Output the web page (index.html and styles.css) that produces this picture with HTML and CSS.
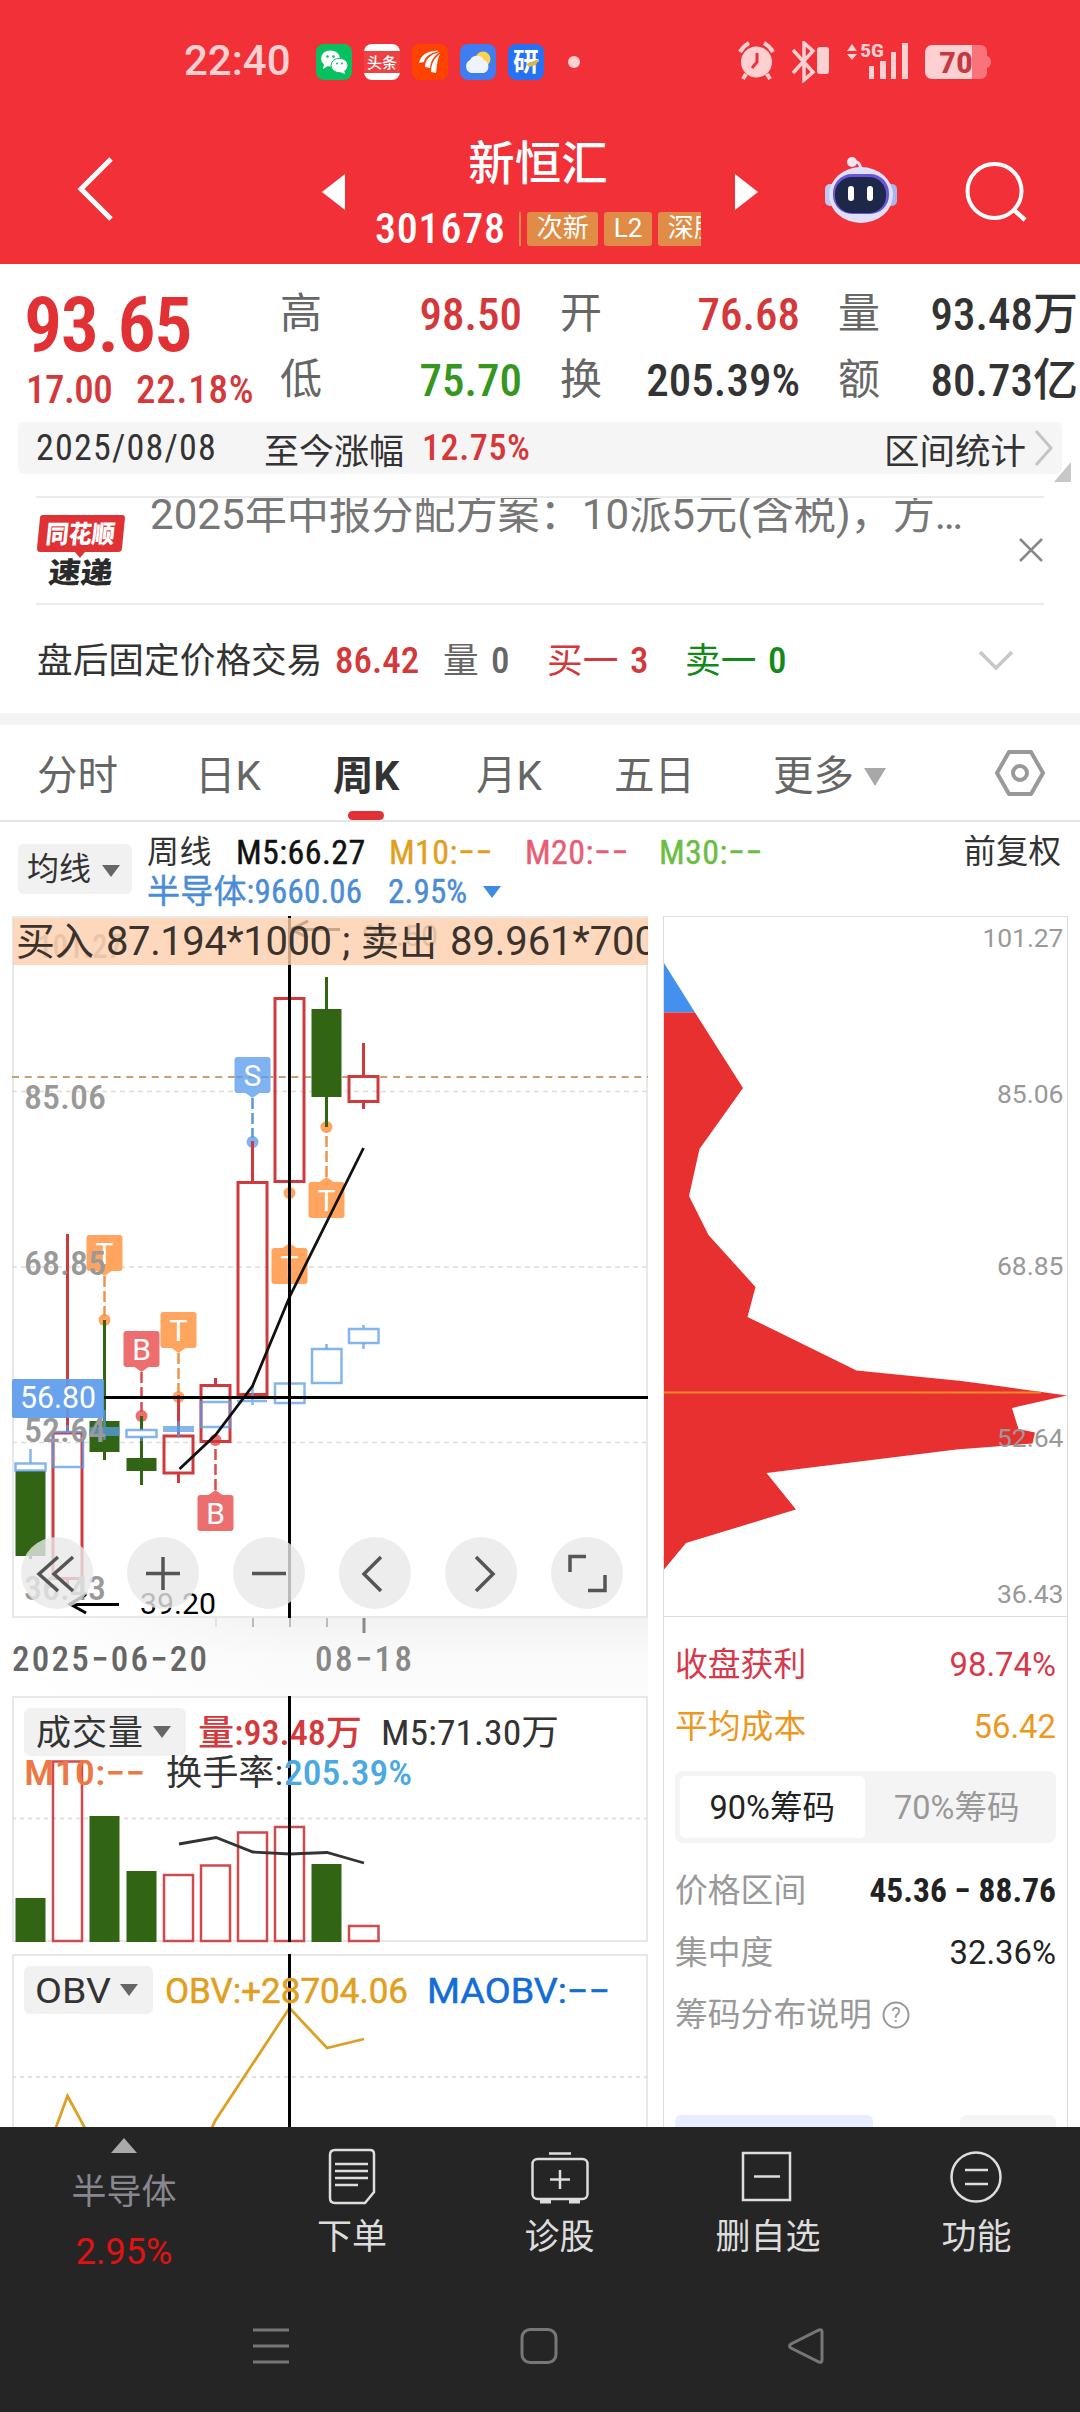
FILE: index.html
```html
<!DOCTYPE html>
<html lang="zh-CN">
<head>
<meta charset="utf-8">
<title>新恒汇 301678</title>
<link rel="stylesheet" href="styles.css">
</head>
<body>
<div class="app">
  <header class="top">
    <div class="status">
      <span class="clock">22:40</span>
      <div class="apps">
        <svg width="36" height="36" viewBox="0 0 36 36"><rect width="36" height="36" rx="8" fill="#07c160"/><ellipse cx="14.500" cy="14.500" rx="9.500" ry="8" fill="#fff"/><path d="M8 20l-1 5 5-3z" fill="#fff"/><ellipse cx="23.500" cy="21.500" rx="8.500" ry="7.200" fill="#fff" stroke="#07c160"/><path d="M28 26l1 4-5-2z" fill="#fff"/><g fill="#07c160"><circle cx="11.500" cy="12.500" r="1.300"/><circle cx="17.500" cy="12.500" r="1.300"/><circle cx="21" cy="19.500" r="1"/><circle cx="26" cy="19.500" r="1"/></g></svg>
        <svg width="36" height="36" viewBox="0 0 36 36"><rect width="36" height="36" rx="8" fill="#fff"/><rect y="7" width="36" height="22" fill="#f04142"/><text x="18" y="24" text-anchor="middle" font-size="15" font-weight="500" fill="#fff" class="cjk">头条</text></svg>
        <svg width="36" height="36" viewBox="0 0 36 36"><rect width="36" height="36" rx="8" fill="#fe4300"/><path d="M7 19C9 10 18 6 27 7c-8 2-14 5-15 11z" fill="#fff"/><path d="M13 23c0-8 6-13 15-15-6 4-9 8-10 16z" fill="#fff"/><path d="M19 28c0-8 3-14 9-18-3 6-3 12-4 19z" fill="#fff"/></svg>
        <svg width="36" height="36" viewBox="0 0 36 36"><rect width="36" height="36" rx="8" fill="#3f7df0"/><circle cx="23" cy="15" r="7.500" fill="#fbd34c"/><path d="M11 29a7 7 0 0 1-1-13 8 8 0 0 1 14 0 7 7 0 0 1 0 13z" fill="#eef3fc"/></svg>
        <svg width="36" height="36" viewBox="0 0 36 36"><rect width="36" height="36" rx="8" fill="#2672f2"/><text x="18" y="27" text-anchor="middle" font-size="26" font-weight="700" fill="#fff" class="cjk">研</text><path d="M18 20l13-5-3 6-7 2z" fill="#d8b64a"/></svg>
      </div>
      <i class="dot"></i>
      <svg class="sys" width="254" height="42" viewBox="738 41 254 42" fill="#ffd0d2">
        <circle cx="756.500" cy="62" r="15.500"/><path d="M740 52a22 22 0 0 1 9-9M764 43a22 22 0 0 1 9 9M746 74l-3 5M767 74l3 5" stroke="#ffd0d2" stroke-width="4" fill="none"/><path d="M757 53v9l-5 6" stroke="#f22f38" stroke-width="3" fill="none"/>
        <path d="M793 50l20 22-9 8V43l9 8-20 22" stroke="#ffd0d2" stroke-width="3.500" fill="none"/><rect x="817" y="47" width="12" height="27" rx="3"/>
        <path d="M847 51l5-7 5 7zM847 54h10l-5 6z"/><text x="860" y="57" font-size="19" font-weight="700" class="num" textLength="24" lengthAdjust="spacingAndGlyphs">5G</text>
        <path d="M869 66h5v13h-5zM880 61h6v18h-6zM891 52h5v27h-5zM902 43h6v36h-6z"/>
        <path d="M972 45h8q7 0 7 7v4q4 1 4 6t-4 6v4q0 7-7 7h-8z" fill="#f8747a"/><path d="M932 45h40v34h-40a7 7 0 0 1-7-7V52a7 7 0 0 1 7-7z"/><text x="939" y="73" font-size="30" font-weight="700" fill="#c43a42" class="num" textLength="34" lengthAdjust="spacingAndGlyphs">70</text>
      </svg>
    </div>
    <div class="titlebar">
      <svg class="back" width="44" height="72" viewBox="0 0 44 72"><path d="M38 6L8 36l30 30" stroke="#fff" stroke-width="5" fill="none"/></svg>
      <svg class="prev" width="23" height="36" viewBox="0 0 23 36"><path d="M23 0v36L0 18z" fill="#fff"/></svg>
      <div class="name">
        <h1>新恒汇</h1>
        <div class="code-row"><span class="code num">301678</span><i class="sep"></i><div class="tags"><span class="tag w71">次新</span><span class="tag w48">L2</span><span class="tag w71">深股</span></div></div>
      </div>
      <svg class="next" width="23" height="36" viewBox="0 0 23 36"><path d="M0 0v36l23-18z" fill="#fff"/></svg>
      <svg class="robot" width="74" height="72" viewBox="824 154 74 72">
        <path d="M861 170c-1-8-4-9-9-8" stroke="#dfe3f8" stroke-width="3" fill="none"/><circle cx="852" cy="162" r="5" fill="#f3e6f0"/>
        <rect x="825" y="184" width="10" height="22" rx="5" fill="#c3c8ef"/><rect x="887" y="184" width="10" height="22" rx="5" fill="#aab4ee"/>
        <ellipse cx="861" cy="195" rx="32" ry="28" fill="#dfe0fa"/><rect x="833" y="174" width="56" height="40" rx="19" fill="#6a55d8"/><rect x="835" y="177" width="51" height="36" rx="17" fill="#1d2748"/>
        <rect x="848" y="186" width="6" height="15" rx="3" fill="#fff"/><rect x="867" y="186" width="6" height="15" rx="3" fill="#fff"/>
      </svg>
      <svg class="search" width="64" height="64" viewBox="964 159 64 64"><circle cx="994.500" cy="191" r="27" fill="none" stroke="#fff" stroke-width="4"/><path d="M1013 209l12 11" stroke="#fff" stroke-width="4.500"/></svg>
    </div>
  </header>

  <section class="quote">
    <div class="price">
      <strong class="num">93.65</strong>
      <div class="chg num"><span>17.00</span><span>22.18%</span></div>
    </div>
    <div class="stats">
      <div><label>高</label><b class="num up">98.50</b></div><div><label>开</label><b class="num up">76.68</b></div><div><label>量</label><b class="num">93.48万</b></div>
      <div><label>低</label><b class="num down">75.70</b></div><div><label>换</label><b class="num">205.39%</b></div><div><label>额</label><b class="num">80.73亿</b></div>
    </div>
  </section>

  <section class="range">
    <span class="num date">2025/08/08</span><span class="lbl">至今涨幅</span><b class="num up pct">12.75%</b>
    <span class="calc">区间统计</span>
    <svg width="20" height="38" viewBox="0 0 20 38"><path d="M2 2l15 17L2 36" fill="none" stroke="#c4c4c4" stroke-width="3"/></svg>
    <svg class="corner" width="17" height="20" viewBox="0 0 17 20"><path d="M17 0v20H0z" fill="#c8c8c8"/></svg>
  </section>

  <section class="news">
    <svg width="90" height="76" viewBox="36 512 90 76"><path d="M43 514h80a3 3 0 0 1 2 3l-3 30q0 4-4 4H85l-5 6-5-6H40q-3 0-3-4l3-30q0-3 3-3z" fill="#e03235"/><text x="45" y="542" font-size="25" font-weight="900" fill="#fff" class="cjk" textLength="69" lengthAdjust="spacingAndGlyphs" transform="translate(57 0) skewX(-6)">同花顺</text><text x="47" y="582" font-size="29" font-weight="900" fill="#2a2a2a" class="cjk" textLength="64" lengthAdjust="spacingAndGlyphs" transform="translate(62 0) skewX(-6)">速递</text></svg>
    <p>2025年中报分配方案：10派5元(含税)，方…</p>
    <svg class="close" width="26" height="26" viewBox="0 0 26 26"><path d="M2 2l22 22M24 2L2 24" stroke="#888" stroke-width="2.500"/></svg>
  </section>

  <section class="after">
    <span>盘后固定价格交易</span><b class="num up">86.42</b><span class="gray">量</span><b class="num gray">0</b><span class="up">买一</span><b class="num up">3</b><span class="sell">卖一</span><b class="num sell">0</b>
    <svg width="36" height="22" viewBox="0 0 36 22"><path d="M2 2l16 16L34 2" fill="none" stroke="#c8c8c8" stroke-width="3.500"/></svg>
  </section>

  <nav class="tabs">
    <span>分时</span><span>日K</span><span class="on">周K</span><span>月K</span><span>五日</span><span>更多<i class="tri"></i></span>
    <svg width="50" height="48" viewBox="0 0 50 48" fill="none" stroke="#999" stroke-width="4"><path d="M14 3h22l12 21-12 21H14L2 24z" stroke-linejoin="round"/><circle cx="25" cy="24" r="7"/></svg>
  </nav>

  <section class="ma">
    <span class="pick">均线<i class="tri"></i></span>
    <div class="legend num">
      <div class="l1"><span>周线</span><span class="ink">M5:66.27</span><span class="c10">M10:−−</span><span class="c20">M20:−−</span><span class="c30">M30:−−</span></div>
      <div class="l2"><span>半导体:9660.06</span><span>2.95%</span><i class="tri"></i></div>
    </div>
    <span class="adj">前复权</span>
  </section>

  <main class="body">
    <div class="left">
      <div class="kline">
        <svg width="636" height="702" viewBox="12 916 636 702">
          <defs>
            <g id="dn"><rect x="-18" width="36" height="36" rx="3"/><path d="M-7 36h14L0 41z"/></g>
            <g id="up"><rect x="-18" width="36" height="36" rx="3"/><path d="M-7 0H7L0-5z"/></g>
          </defs>
          <rect x="13" y="917" width="634" height="700" fill="#fff" stroke="#e8e8e8" stroke-width="2"/>
          <g stroke="#dcdcdc" stroke-width="1.500" stroke-dasharray="5 4"><path d="M12 1091.500H648M12 1267H648M12 1442.500H648"/></g>
          <path d="M12 1077H648" stroke="#c5a070" stroke-width="2" stroke-dasharray="7 5.700"/>
          <g fill="#ffa55f"><use href="#dn" x="104.500" y="1235"/><use href="#dn" x="178.500" y="1312"/><use href="#up" x="289.500" y="1248"/><use href="#up" x="326.500" y="1182"/><circle cx="104.500" cy="1320" r="6"/><circle cx="178.500" cy="1397" r="6"/><circle cx="289.500" cy="1193" r="6"/><circle cx="326.500" cy="1127" r="6"/></g>
          <g fill="#ed6e6e"><use href="#dn" x="141.500" y="1331"/><use href="#up" x="215.500" y="1495"/><circle cx="141.500" cy="1416" r="6"/><circle cx="215.500" cy="1440" r="6"/></g>
          <g fill="#7fb2f0"><use href="#dn" x="252.500" y="1057"/><circle cx="252.500" cy="1142" r="6"/></g>
          <path d="M236 1077h34" stroke="#6e9dd4" stroke-width="2" stroke-dasharray="7 5.700"/>
          <g stroke-width="2.500" stroke-dasharray="11 4"><path d="M104.500 1276v40M178.500 1353v40M326.500 1177v-46" stroke="#ee9448"/><path d="M141.500 1372v40M215.500 1490v-44" stroke="#dc4a4a"/><path d="M252.500 1098v40" stroke="#5b97dc"/></g>
          <g fill="#fff" font-size="30" text-anchor="middle"><text x="104.500" y="1264">T</text><text x="178.500" y="1341">T</text><text x="289.500" y="1277">T</text><text x="326.500" y="1211">T</text><text x="141.500" y="1360">B</text><text x="215.500" y="1524">B</text><text x="252.500" y="1086">S</text></g>
          <g fill="none" stroke="#d03a3c" stroke-width="3"><path d="M67.500 1234v199M67.500 1578v8M178.500 1395v41M178.500 1473v10M215.500 1378v7M252.500 1141v41M363.500 1043v33M363.500 1102v7M289.500 965v33"/><rect x="53" y="1433" width="29" height="145.500"/><rect x="164" y="1436" width="29" height="37"/><rect x="201" y="1385.500" width="29" height="56"/><rect x="238" y="1182.500" width="29" height="212"/><rect x="275" y="998.500" width="29" height="183"/><rect x="349" y="1076.500" width="29" height="25"/></g>
          <g fill="#316514"><path d="M15.500 1471h30v85h-30zM89.500 1421h30v31h-30zM126.500 1458h30v13h-30zM311.500 1009h30v88h-30z"/><path d="M29 1556h3v3h-3zM103 1320h3v140h-3zM140 1416h3v69h-3zM325 977h3v150h-3z"/></g>
          <g fill="none" stroke="#5b9de6" stroke-opacity=".75" stroke-width="2.500"><path d="M30.500 1449v14M67.500 1425v8M104.500 1410v17M104.500 1436v4M141.500 1437v4M178.500 1421v17M237 1401h30M252.500 1385v20M326.500 1344v5M363.500 1325v3M363.500 1343v6"/><rect x="15.500" y="1463.500" width="30" height="7" fill="#fff"/><rect x="53" y="1432" width="30" height="35"/><rect x="126.500" y="1430" width="30" height="7" fill="#fff"/><rect x="201" y="1402" width="29" height="25"/><rect x="275" y="1383.500" width="29.500" height="19.500"/><rect x="312" y="1349" width="29.500" height="34"/><rect x="349" y="1329" width="29.500" height="14"/></g>
          <path d="M89.500 1427h30v9h-30zM163 1426h31v6h-31z" fill="#5b9de6" fill-opacity=".75"/>
          <path d="M179.500 1469l36-34 37-49 37.500-90 73.500-148" fill="none" stroke="#111" stroke-width="2.800"/>
          <g class="num" font-size="34" fill="#999" font-weight="500"><text x="37" y="958" font-size="34" textLength="86" lengthAdjust="spacingAndGlyphs">101.27</text><text x="24" y="1109" textLength="82" lengthAdjust="spacingAndGlyphs">85.06</text><text x="24" y="1275" textLength="82" lengthAdjust="spacingAndGlyphs">68.85</text><text x="24" y="1442" textLength="82" lengthAdjust="spacingAndGlyphs">52.64</text><text x="24" y="1600" textLength="82" lengthAdjust="spacingAndGlyphs">36.43</text></g>
          <g stroke="#000" stroke-width="3" fill="none"><path d="M289.500 916v702M104 1397.500H648"/><path d="M119 1604.500H69M86 1594.500l-16 9.500 16 9"/><path d="M340 929.500h-48M308 921l-17 8.500 17 8"/></g>
          <text x="140" y="1614" font-size="29" textLength="76" lengthAdjust="spacingAndGlyphs">39.20</text><text x="362" y="946" font-size="29" fill="#777" textLength="76" lengthAdjust="spacingAndGlyphs">98.50</text>
          <rect x="12" y="1379" width="92" height="39" rx="2" fill="#5c9bed" fill-opacity=".92"/><text x="20" y="1408" font-size="31" fill="#fff" textLength="76" lengthAdjust="spacingAndGlyphs">56.80</text>
          <rect x="13" y="918" width="635" height="47" fill="#fdceac" fill-opacity=".8"/>
          <g class="cjk" font-size="40" fill="#3a322c"><text x="16" y="955" font-size="39">买入</text><text x="106" y="955" textLength="226">87.194*1000</text><text x="342" y="955">;</text><text x="361" y="955" font-size="38">卖出</text><text x="450" y="955" textLength="207">89.961*700</text></g>
        </svg>
        <div class="tools">
          <button><svg viewBox="0 0 72 72"><path d="M37 20L18 37l19 17M52 20L33 37l19 17"/></svg></button>
          <button><svg viewBox="0 0 72 72"><path d="M36 20v33M19 36.500h34"/></svg></button>
          <button><svg viewBox="0 0 72 72"><path d="M19 36.500h34"/></svg></button>
          <button><svg viewBox="0 0 72 72"><path d="M42 20L25 37l17 17"/></svg></button>
          <button><svg viewBox="0 0 72 72"><path d="M31 20l17 17-17 17"/></svg></button>
          <button><svg viewBox="0 0 72 72"><path d="M35 19.500H19V35M54 38v15.500H37"/></svg></button>
        </div>
      </div>
      <svg class="axis" width="636" height="78" viewBox="12 1618 636 78"><path d="M253 1618v9M290 1618v9M327 1618v9" stroke="#bbb" stroke-width="2"/><path d="M216 1618v9" stroke="#e4e4e4" stroke-width="2"/><path d="M364 1618v15" stroke="#888" stroke-width="3"/><g class="num" font-size="35" font-weight="500"><text x="12" y="1671" fill="#666" textLength="195">2025−06−20</text><text x="315" y="1671" fill="#888" textLength="97">08−18</text></g></svg>
      <svg width="636" height="247" viewBox="12 1696 636 247">
        <rect x="13" y="1697" width="634" height="244" fill="#fff" stroke="#e8e8e8" stroke-width="2"/><path d="M12 1818.500H648" stroke="#e2e2e2" stroke-width="2" stroke-dasharray="4 4"/>
        <rect x="24" y="1708" width="162" height="48" rx="6" fill="#f1f1f1"/>
        <g fill="none" stroke="#d04a4c" stroke-width="2.500"><path d="M53 1941v-179.500h29V1941zM164 1941v-66h29v66zM201 1941v-75.500h29V1941zM238 1941v-108.500h29V1941zM275 1941v-114h29v114zM349 1941v-15h29.500v15z"/></g>
        <path d="M15.500 1898h30v44h-30zM89.500 1816h30v126h-30zM126.500 1871h30v71h-30zM311.500 1864h30v78h-30z" fill="#316514"/>
        <path d="M179 1844l37-6.500 37 14.500 37 2 37-1.500 37 10.500" fill="none" stroke="#333" stroke-width="2.800"/>
        <path d="M289.500 1696v246" stroke="#000" stroke-width="3"/>
        <path d="M153 1726h18l-9 12z" fill="#666"/>
        <g class="num" font-size="35" font-weight="500" fill="#333"><text x="36" y="1745" font-weight="400" textLength="107">成交量</text><text x="198" y="1745" fill="#d5393b" textLength="164" lengthAdjust="spacingAndGlyphs">量:93.48万</text><text x="381" y="1745" textLength="178" lengthAdjust="spacingAndGlyphs" font-weight="400">M5:71.30万</text><text x="24" y="1785" fill="#ec7846" textLength="121" lengthAdjust="spacingAndGlyphs">M10:−−</text><text x="166" y="1785" textLength="117" lengthAdjust="spacingAndGlyphs" font-weight="400">换手率:</text><text x="284" y="1785" fill="#4aa9e2" textLength="128" lengthAdjust="spacingAndGlyphs">205.39%</text></g>
      </svg>
      <svg class="obv" width="636" height="173" viewBox="12 1954 636 173">
        <path d="M13 2140V1955H647v185" fill="#fff" stroke="#e8e8e8" stroke-width="2"/><path d="M12 2077H648" stroke="#e2e2e2" stroke-width="2" stroke-dasharray="4 4"/>
        <rect x="24" y="1966" width="129" height="48" rx="6" fill="#f1f1f1"/>
        <path d="M55 2130l12.500-34L86 2130M211 2130l4-9 74.500-113 37.500 40 37-9" fill="none" stroke="#dca026" stroke-width="2.800"/>
        <path d="M289.500 1954v173" stroke="#000" stroke-width="3"/>
        <path d="M120 1984h18l-9 12z" fill="#666"/>
        <g class="cjk" font-size="35"><text x="35" y="2003" fill="#333" textLength="76" lengthAdjust="spacingAndGlyphs">OBV</text><text x="165" y="2003" fill="#e0a01e" stroke="#e0a01e" stroke-width=".5" textLength="243" lengthAdjust="spacingAndGlyphs">OBV:+28704.06</text><text x="427" y="2003" fill="#126dd4" stroke="#126dd4" stroke-width=".5" textLength="183" lengthAdjust="spacingAndGlyphs">MAOBV:−−</text></g>
      </svg>
    </div>

    <aside class="chips">
      <svg width="403" height="699" viewBox="664 917 403 699">
        <path d="M664 963l31 49.500h-31z" fill="#4490ee"/>
        <path d="M664 1012.500h31L743 1088l-43.500 61-10.500 47 19.500 39 47 52-8 30 109 53.500 105 10.500 41 5.500 64.500 9-55 12.500 6.500 21 16.500 3.500-2.500 11-76 6L766.500 1473l29.500 36.500-110 33.500-22 26.500z" fill="#e83031"/>
        <path d="M664 1392.500h377" stroke="#f08a22" stroke-width="2"/>
        <g font-size="26.500" fill="#999" text-anchor="end"><text x="1063.500" y="947" textLength="81">101.27</text><text x="1063.500" y="1103">85.06</text><text x="1063.500" y="1275">68.85</text><text x="1063.500" y="1446.500">52.64</text><text x="1063.500" y="1602.500">36.43</text></g>
      </svg>
      <div class="info">
        <div class="row profit"><span>收盘获利</span><span>98.74%</span></div>
        <div class="row cost"><span>平均成本</span><span>56.42</span></div>
        <div class="seg"><span class="act">90%筹码</span><span>70%筹码</span></div>
        <div class="row"><span>价格区间</span><b class="num">45.36 − 88.76</b></div>
        <div class="row"><span>集中度</span><em>32.36%</em></div>
        <div class="row help"><span>筹码分布说明</span><svg width="28" height="28" viewBox="0 0 28 28"><circle cx="14" cy="14" r="12.500" fill="none" stroke="#999" stroke-width="2"/><text x="14" y="21" text-anchor="middle" font-size="20" fill="#999">?</text></svg></div>
        <div class="pills"><i></i><i></i></div>
      </div>
    </aside>
  </main>

  <footer>
    <div class="actions">
      <div class="sector"><svg width="26" height="15" viewBox="0 0 26 15"><path d="M13 0l13 15H0z" fill="#aaa"/></svg><span>半导体</span><b>2.95%</b></div>
      <div class="act-item"><svg viewBox="0 0 60 60"><path d="M13 3h35q4 0 4 4v38L43 56H13q-5 0-5-5V8q0-5 5-5z"/><path d="M13 17h33M13 24h33M13 31h33M13 38h23"/></svg><span>下单</span></div>
      <div class="act-item"><svg viewBox="0 0 60 60"><rect x="2.500" y="12" width="55" height="40" rx="5"/><path d="M19 6.500h22M30 23v19M20 32.500h20"/><path d="M10 54h11M39 54h11" stroke-width="5"/></svg><span>诊股</span></div>
      <div class="act-item"><svg viewBox="0 0 60 60"><rect x="5" y="6" width="47" height="47"/><path d="M16 29.500h26"/></svg><span>删自选</span></div>
      <div class="act-item"><svg viewBox="0 0 60 60"><circle cx="29" cy="30" r="24.500"/><path d="M18 23h23M18 37h23"/></svg><span>功能</span></div>
    </div>
    <div class="sysnav">
      <svg width="38" height="40" viewBox="0 0 38 40"><path d="M1 4h36M1 20h36M1 36h36"/></svg>
      <svg width="38" height="40" viewBox="0 0 38 40"><rect x="2" y="3.500" width="34" height="33" rx="8"/></svg>
      <svg width="38" height="40" viewBox="0 0 38 40"><path d="M31 4q3-1 3 2v28q0 3-3 2L3 22q-3-2 0-4z"/></svg>
    </div>
  </footer>
</div>
</body>
</html>
```
FILE: styles.css
```css
* { box-sizing: border-box; }
body { margin: 0; background: #fff; font-family: Roboto, "Noto Sans CJK SC", sans-serif; color: #333; }
i { font-style: normal; }
svg { display: block; flex: none; }
.app { width: 1080px; height: 2412px; display: flex; flex-direction: column; overflow: hidden; white-space: nowrap; }
.num { font-family: "Roboto Condensed", Roboto, "Noto Sans CJK SC", sans-serif; }
.cjk { font-family: Roboto, "Noto Sans CJK SC", sans-serif; }
.up { color: #d5383a; }
.down { color: #36961f; }
.gray { color: #666; }
.sell { color: #128a18; }
.tri { display: inline-block; width: 18px; height: 12px; background: #666; clip-path: polygon(0 0, 100% 0, 50% 100%); }

.top { height: 264px; background: #f13038; color: #fff; }
.status { display: flex; align-items: center; height: 124px; padding-left: 184px; }
.clock { width: 132px; font-size: 42px; line-height: 48px; margin-top: -3px; color: #ffd0d2; font-weight: 500; }
.apps { display: flex; gap: 12px; }
.dot { width: 12px; height: 12px; border-radius: 50%; background: #ffd0d2; margin-left: 24px; }
.sys { margin-left: 158px; }
.titlebar { display: flex; height: 140px; }
.back { margin: 29px 0 0 73px; }
.prev { margin: 50px 0 0 205px; }
.next { margin: 50px 0 0 0; }
.robot { margin: 30px 0 0 66px; }
.search { margin: 35px 0 0 66px; }
.name { width: 390px; padding: 12px 34px 0 30px; }
.name h1 { margin: 0; font-size: 46.500px; font-weight: 500; line-height: 56px; text-align: center; }
.code-row { display: flex; align-items: center; height: 38px; margin-top: 18px; }
.code { width: 146px; font-size: 42px; font-weight: 500; line-height: 36px; letter-spacing: .8px; }
.sep { width: 2px; height: 34px; background: #e08c46; margin-right: 6px; }
.tags { display: flex; gap: 6px; width: 176px; overflow: hidden; }
.tag { flex: none; height: 34px; background: #e08c46; border-radius: 3px; font-size: 26px; line-height: 33px; text-align: center; }
.w71 { width: 71px; }
.w48 { width: 48px; }

.quote { display: flex; height: 158px; }
.price { width: 281px; padding-left: 26px; color: #e23134; }
.price strong { display: block; height: 90px; padding-top: 16px; font-size: 76px; line-height: 90px; font-weight: 600; letter-spacing: -1.500px; margin-left: -2px; }
.chg { display: flex; padding-top: 13px; font-size: 39px; line-height: 46px; font-weight: 500; color: #d5383a; }
.chg span:first-child { width: 110px; letter-spacing: -.5px; }
.chg span + span { letter-spacing: .8px; }
.stats { display: grid; grid-template-columns: 242px 240px 240px; grid-auto-rows: 66px; column-gap: 38px; padding-top: 17px; margin-left: -1px; }
.stats div { display: flex; justify-content: space-between; align-items: center; }
.stats label { font-size: 42px; line-height: 50px; color: #666; }
.stats b { font-size: 45px; line-height: 50px; font-weight: 500; margin-top: 1px; }

.range { position: relative; display: flex; align-items: center; height: 52px; margin: 0 18px; padding-left: 18px; background: #f5f5f5; border-radius: 6px; font-size: 35px; }
.date { width: 228px; font-size: 36px; letter-spacing: 1.200px; }
.lbl { width: 158px; }
.pct { font-size: 36px; font-weight: 500; letter-spacing: .6px; flex: 1; }
.calc { width: 150px; font-size: 35.500px; }
.range > svg { margin-right: 8px; }
.range .corner { position: absolute; right: -9px; top: 40px; margin: 0; }

.news { display: flex; height: 109px; margin: 22px 36px 0; border: solid #ebebeb; border-width: 2px 0; overflow: hidden; }
.news > svg { margin-top: 15px; }
.news p { flex: 1; margin: -11px 0 0 24px; font-size: 42.150px; line-height: 56px; color: #777; }
.news .close { margin-top: 39px; }

.after { display: flex; align-items: center; height: 108px; padding: 3px 66px 0 37px; font-size: 35.700px; line-height: 44px; }
.after b { font-size: 37px; font-weight: 500; }
.after > :nth-child(1) { width: 298px; }
.after > :nth-child(2) { width: 108px; }
.after > :nth-child(3) { width: 48px; }
.after > :nth-child(4) { width: 56px; }
.after > :nth-child(5) { width: 83px; }
.after > :nth-child(6) { width: 55px; }
.after > :nth-child(7) { width: 83px; }
.after > :nth-child(8) { flex: 1; }

.tabs { position: relative; display: grid; grid-template-columns: 158px 138px 143px 138px 159px 222px 50px; align-items: center; height: 109px; border-top: 12px solid #f4f4f4; border-bottom: 2px solid #e6e6e6; padding-left: 37px; font-size: 40.500px; color: #666; }
.tabs .on { position: relative; font-weight: 700; color: #333; }
.tabs .on::after { content: ""; position: absolute; left: 15px; top: 68px; width: 36px; height: 9px; border-radius: 5px; background: #e23134; }
.tabs .tri { width: 22px; height: 18px; margin-left: 10px; background: #a8a8a8; vertical-align: 4px; }

.ma { display: flex; height: 94px; padding: 0 19px 0 18px; }
.pick { width: 114px; height: 50px; margin-top: 22px; padding-left: 9px; border-radius: 6px; background: #f1f1f1; font-size: 32px; line-height: 50px; }
.pick .tri { margin-left: 11px; vertical-align: 3px; }
.legend { flex: 1; margin-left: 15px; padding-top: 10px; font-size: 34px; font-weight: 400; line-height: 40px; }
.l1 { display: grid; grid-template-columns: 89px 153px 136px 134px 120px; height: 40px; -webkit-text-stroke: .4px; }
.l1 span:first-child { font-size: 32px; -webkit-text-stroke: 0; }
.l1 span { letter-spacing: .4px; }
.ink { color: #111; }
.c10 { color: #dfa01e; }
.c20 { color: #e65e76; }
.c30 { color: #6cbd44; }
.l2 { display: grid; grid-template-columns: 241px 95px 20px; align-items: center; color: #4a8cd6; font-size: 33px; height: 40px; letter-spacing: .2px; -webkit-text-stroke: .4px; }
.l2 .tri { background: #3f8be4; }
.adj { font-size: 32.500px; line-height: 40px; padding-top: 10px; }

.body { display: flex; height: 1211px; padding-left: 12px; overflow: hidden; }
.left { width: 636px; }
.kline { position: relative; height: 702px; }
.tools { position: absolute; left: 9px; top: 621px; display: flex; gap: 34px; }
.tools button { width: 72px; height: 72px; padding: 0; border: 0; border-radius: 50%; background: rgba(232,232,232,.8); }
.tools svg { fill: none; stroke: #555; stroke-width: 3.500; }
.axis { background: linear-gradient(90deg, #fff, rgba(255,255,255,0) 45%), linear-gradient(#f2f2f2, #fafafa 50%, #fcfcfc); }
.obv { margin-top: 11px; }
.chips { width: 405px; margin-left: 15px; border: 1px solid #ddd; border-bottom: 0; }
.info { height: 511px; border-top: 1px solid #ddd; padding: 17px 11px 0; display: flex; flex-direction: column; font-size: 32.800px; color: #999; }
.row { flex: none; display: flex; justify-content: space-between; align-items: center; height: 62px; line-height: 60px; }
.row b { color: #222; font-weight: 700; font-size: 33.500px; }
.row em { color: #222; font-style: normal; }
.profit { color: #d8384a; }
.cost { color: #ec981f; }
.seg { flex: none; display: flex; height: 72px; margin: 13px 0 17px; padding: 5px 7px 5px 5px; border-radius: 8px; background: #f4f4f4; font-size: 32.500px; line-height: 64px; text-align: center; }
.seg span { flex: 1; }
.seg .act { border-radius: 5px; background: #fff; color: #222; }
.row.help { justify-content: flex-start; gap: 10px; }
.pills { display: flex; justify-content: space-between; margin-top: 69px; }
.pills i { height: 40px; width: 96px; border-radius: 6px; background: #f4f4f4; }
.pills i:first-child { width: 198px; background: #e8eefd; }

footer { height: 285px; background: #252525; }
.actions { display: grid; grid-template-columns: 248px 208px 207px 210px 207px; height: 170px; }
.sector { display: flex; flex-direction: column; align-items: center; padding-top: 11px; font-size: 35px; color: #888790; }
.sector span { line-height: 50px; margin-top: 15px; }
.sector b { font-weight: 400; color: #e01212; font-size: 36px; line-height: 50px; margin-top: 9px; }
.act-item { display: flex; flex-direction: column; align-items: center; padding-top: 20px; font-size: 35px; color: #ddd; }
.act-item svg { width: 60px; height: 60px; fill: none; stroke: #ddd; stroke-width: 2.500; }
.act-item span { line-height: 50px; margin-top: 6px; }
.sysnav { display: flex; padding: 29px 0 0 252px; gap: 230px; }
.sysnav svg { fill: none; stroke: #777; stroke-width: 3; }
```
